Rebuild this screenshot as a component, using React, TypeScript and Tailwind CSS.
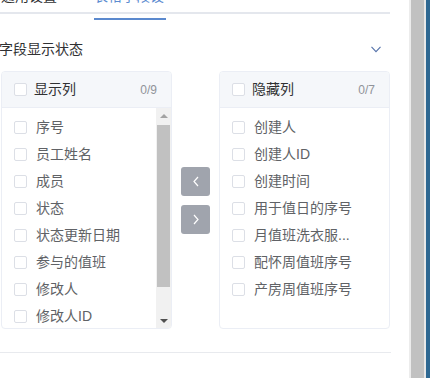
import React from "react";

const FONT = '"Helvetica Neue", "Liberation Sans", "Noto Sans CJK SC", sans-serif';

function Box() {
  return <span className="block w-[13px] h-[13px] shrink-0 border border-[#dcdfe6] rounded-[2px] bg-white" />;
}

function Header({ title, count }: { title: string; count: string }) {
  return (
    <div className="h-[36px] shrink-0 bg-[#f5f7fa] border-b border-[#ebeef5] flex items-center pl-[12px] pr-[14px]">
      <Box />
      <span className="ml-[7px] text-[14px] text-[#303133] flex-1">{title}</span>
      <span className="text-[12px] text-[#909399]">{count}</span>
    </div>
  );
}

function Item({ label }: { label: string }) {
  return (
    <div className="h-[27px] flex items-center pl-[12px]">
      <Box />
      <span className="ml-[9px] text-[14px] text-[#606266] whitespace-nowrap">{label}</span>
    </div>
  );
}

const shown = ["序号", "员工姓名", "成员", "状态", "状态更新日期", "参与的值班", "修改人", "修改人ID"];
const hidden = ["创建人", "创建人ID", "创建时间", "用于值日的序号", "月值班洗衣服...", "配怀周值班序号", "产房周值班序号"];

function Chev({ dir }: { dir: "left" | "right" }) {
  return (
    <svg width="8" height="11" viewBox="0 0 8 11" fill="none">
      {dir === "left" ? (
        <polyline points="6,1 2,5.5 6,10" stroke="white" strokeWidth="1.2" />
      ) : (
        <polyline points="2,1 6,5.5 2,10" stroke="white" strokeWidth="1.2" />
      )}
    </svg>
  );
}

export default function App() {
  return (
    <div className="w-[430px] h-[378px] overflow-hidden bg-white flex" style={{ fontFamily: FONT }}>
      <div className="w-[409px] shrink-0 flex flex-col">
        {/* tabs */}
        <div className="relative w-[390px] h-[28px] -mt-[14px] border-b-2 border-[#e4e7ed] flex shrink-0">
          <span className="ml-px w-[56px] text-[14px] leading-[20px] text-[#303133] whitespace-nowrap">通用设置</span>
          <span className="relative ml-[37px] w-[72px] text-[14px] leading-[20px] text-[#5b8bd0] whitespace-nowrap">
            表格字段设
            <span className="absolute left-0 right-0 -bottom-[8px] h-[2px] bg-[#5b89ce]" />
          </span>
        </div>
        {/* title */}
        <div className="w-[390px] h-[34px] mt-[18px] flex items-center justify-between shrink-0">
          <span className="-ml-[1px] text-[14px] text-[#303133]">字段显示状态</span>
          <svg className="mr-[9px]" width="10" height="7" viewBox="0 0 10 7" fill="none">
            <polyline points="0.5,0.8 5,5.6 9.5,0.8" stroke="#5572aa" strokeWidth="1.1" />
          </svg>
        </div>
        {/* transfer */}
        <div className="mt-[5px] w-[390px] h-[258px] flex shrink-0">
          <div className="ml-px w-[171px] h-full border border-[#ebeef5] rounded-[4px] overflow-hidden flex flex-col">
            <Header title="显示列" count="0/9" />
            <div className="flex-1 flex min-h-0">
              <div className="flex-1 pt-[6px] overflow-hidden">
                {shown.map((s) => (
                  <Item key={s} label={s} />
                ))}
              </div>
              <div className="w-[15px] shrink-0 bg-[#f1f1f1] flex flex-col">
                <div className="h-[15px] flex items-center justify-center">
                  <span className="block w-0 h-0 border-x-[4px] border-x-transparent border-b-[4px] border-b-[#a3a3a3]" />
                </div>
                <div className="flex-1 px-[1px] pt-[2px]">
                  <div className="h-[162px] bg-[#c1c1c1]" />
                </div>
                <div className="h-[15px] flex items-center justify-center">
                  <span className="block w-0 h-0 border-x-[4px] border-x-transparent border-t-[4px] border-t-[#505050]" />
                </div>
              </div>
            </div>
          </div>
          <div className="w-[47px] shrink-0 flex flex-col items-center justify-center gap-[9px]">
            <div className="w-[29px] h-[29px] rounded-[3px] bg-[#a0a4ad] flex items-center justify-center">
              <Chev dir="left" />
            </div>
            <div className="w-[29px] h-[29px] rounded-[3px] bg-[#a0a4ad] flex items-center justify-center">
              <Chev dir="right" />
            </div>
          </div>
          <div className="w-[171px] h-full border border-[#ebeef5] rounded-[4px] overflow-hidden flex flex-col">
            <Header title="隐藏列" count="0/7" />
            <div className="flex-1 pt-[6px] overflow-hidden">
              {hidden.map((s) => (
                <Item key={s} label={s} />
              ))}
            </div>
          </div>
        </div>
        <div className="mt-[23px] w-[391px] h-px bg-[#e8eaee] shrink-0" />
      </div>
      <div className="w-[2px] shrink-0 bg-[#ececec]" />
      <div className="w-[13px] shrink-0 bg-[#c1c1c1]" />
      <div className="w-[2px] shrink-0 bg-[#e8e8e8]" />
      <div className="flex-1 bg-[#2e6892]" />
    </div>
  );
}
